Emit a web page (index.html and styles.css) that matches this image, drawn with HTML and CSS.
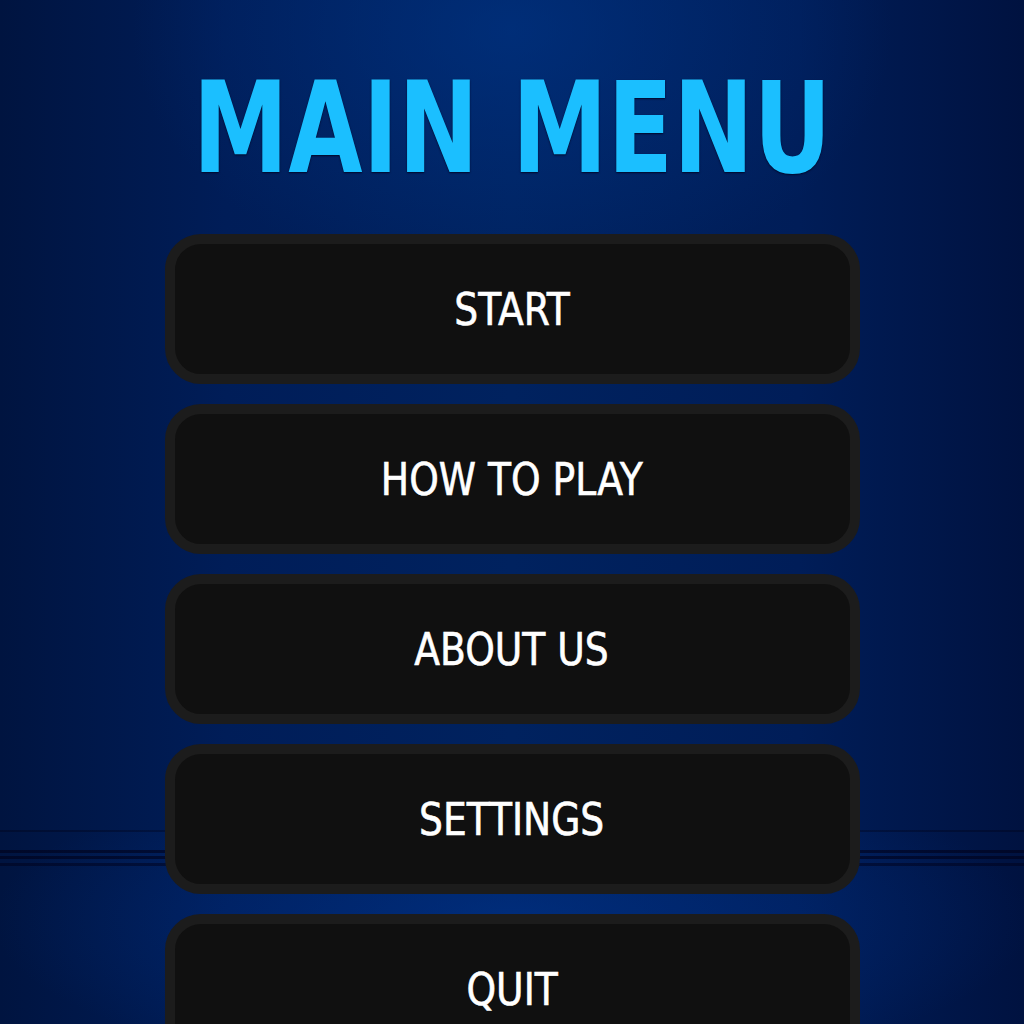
FILE: index.html
```html
<!DOCTYPE html>
<html>
<head>
<meta charset="utf-8">
<link rel="stylesheet" href="styles.css">
</head>
<body>
<div class="screen">
  <div class="floor"></div>
  <h1 class="title">MAIN MENU</h1>
  <nav class="menu">
    <button class="btn"><span class="label">START</span></button>
    <button class="btn"><span class="label">HOW TO PLAY</span></button>
    <button class="btn"><span class="label">ABOUT US</span></button>
    <button class="btn"><span class="label">SETTINGS</span></button>
    <button class="btn"><span class="label">QUIT</span></button>
  </nav>
</div>
</body>
</html>
```

FILE: styles.css
```css
* { box-sizing: border-box; }
html, body { margin: 0; padding: 0; }
body { width: 1024px; height: 1024px; overflow: hidden; background: #001a55; }

.screen {
  position: relative;
  width: 1024px;
  height: 1024px;
  overflow: hidden;
  background:
    radial-gradient(ellipse 380px 260px at 512px 30px, rgba(0, 55, 140, 0.55), rgba(0, 55, 140, 0) 100%),
    linear-gradient(90deg, #001440 0%, #001d58 22%, #00225f 50%, #001d58 78%, #001240 100%);
  display: flex;
  flex-direction: column;
  align-items: center;
}

.floor {
  position: absolute;
  left: 0;
  right: 0;
  top: 830px;
  bottom: 0;
  background:
    linear-gradient(180deg, rgba(0,0,20,0.35) 0px, rgba(0,0,20,0.35) 2px, transparent 2px, transparent 20px,
      rgba(0,0,25,0.6) 20px, rgba(0,0,25,0.6) 23px, transparent 23px, transparent 26px,
      rgba(0,0,25,0.6) 26px, rgba(0,0,25,0.6) 29px, transparent 29px, transparent 33px,
      rgba(0,0,25,0.5) 33px, rgba(0,0,25,0.5) 36px, transparent 36px),
    radial-gradient(ellipse 520px 160px at 512px 90px, rgba(0, 55, 150, 0.5), rgba(0, 50, 140, 0) 100%);
}

.title {
  position: relative;
  margin: 63px 0 0 0;
  height: 130px;
  font-family: "DejaVu Sans Condensed", "DejaVu Sans", sans-serif;
  font-weight: bold;
  font-size: 127px;
  line-height: 130px;
  color: #1bbfff;
  letter-spacing: 0;
  transform: scaleX(0.84);
  text-shadow: 0 1px 2px #00082a;
  white-space: nowrap;
}

.menu {
  position: relative;
  margin-top: 41px;
  display: flex;
  flex-direction: column;
  gap: 20px;
  width: 695px;
}

.btn {
  height: 150px;
  width: 100%;
  border: 10px solid #1c1c1c;
  border-radius: 36px;
  background: #101010;
  color: #ffffff;
  font-family: "DejaVu Sans Condensed", "DejaVu Sans", sans-serif;
  font-size: 45px;
  font-weight: normal;
  padding: 0;
  display: flex;
  align-items: center;
  justify-content: center;
}

.label {
  display: inline-block;
  transform: scaleX(0.93);
  white-space: nowrap;
  -webkit-text-stroke: 0.6px #ffffff;
}
```
